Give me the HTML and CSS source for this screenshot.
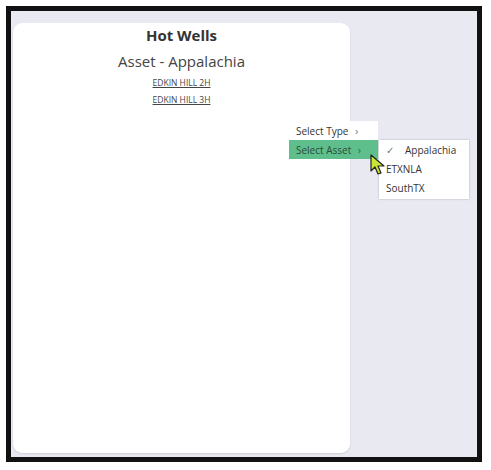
FILE: index.html
```html
<!DOCTYPE html>
<html>
<head>
<meta charset="utf-8">
<link rel="stylesheet" href="styles.css">
</head>
<body>
<div class="frame">
  <div class="card">
    <h1 class="title">Hot Wells</h1>
    <h2 class="subtitle">Asset - Appalachia</h2>
    <a class="well" href="#">EDKIN HILL 2H</a>
    <a class="well" href="#">EDKIN HILL 3H</a>
  </div>
  <div class="menu">
    <div class="item">Select Type <span class="chev">&#8250;</span></div>
    <div class="item active">Select Asset <span class="chev">&#8250;</span></div>
  </div>
  <div class="submenu">
    <div class="sub"><span class="check">&#10003;</span>Appalachia</div>
    <div class="sub">ETXNLA</div>
    <div class="sub">SouthTX</div>
  </div>
  <svg class="cursor" width="16" height="22" viewBox="0 0 16 22">
    <path d="M1 1 L1 17 L5 13 L8 20 L11 19 L8 12 L14 12 Z" fill="#c8e632" stroke="#222" stroke-width="1.2" stroke-linejoin="round"/>
  </svg>
</div>
</body>
</html>
```
FILE: styles.css
```css
html, body {
  margin: 0;
  padding: 0;
  background: #ffffff;
}
body {
  font-family: "Open Sans", "Liberation Sans", sans-serif;
}
.frame {
  position: relative;
  box-sizing: border-box;
  margin: 6px 0 0 6px;
  width: 476px;
  height: 456px;
  border: 5px solid #111;
  background: #e9e9f1;
  padding: 12px 0 0 2px;
}
.card {
  box-sizing: border-box;
  width: 337px;
  height: 430px;
  background: #fff;
  border-radius: 9px;
  box-shadow: 0 1px 2px rgba(0,0,0,0.12);
  display: flex;
  flex-direction: column;
  align-items: center;
  padding-top: 2px;
}
.title {
  margin: 0;
  font-size: 15px;
  font-weight: 700;
  color: #333;
  line-height: 20px;
}
.subtitle {
  margin: 6px 0 0;
  font-size: 15px;
  font-weight: 400;
  color: #444;
  line-height: 20px;
}
.well {
  font-size: 8.5px;
  color: #444;
  text-decoration: underline;
  line-height: 16px;
  margin-top: 4px;
}
.well + .well {
  margin-top: 1px;
}
.menu {
  position: absolute;
  left: 278px;
  top: 110px;
  width: 89px;
  background: #fff;
  font-size: 10px;
  color: #333;
}
.item {
  height: 19px;
  line-height: 19px;
  padding-left: 7px;
}
.item.active {
  background: #5ebf8d;
  color: #2c4a3a;
}
.chev {
  font-size: 11px;
  margin-left: 4px;
  color: #777;
}
.item.active .chev {
  color: #3c6a52;
}
.submenu {
  position: absolute;
  left: 368px;
  top: 129px;
  width: 90px;
  background: #fff;
  box-shadow: 0 0 2px rgba(0,0,0,0.25);
  font-size: 10px;
  color: #333;
  padding: 1px 0;
}
.sub {
  height: 19px;
  line-height: 19px;
  padding-left: 7px;
}
.check {
  display: inline-block;
  width: 19px;
  color: #777;
  font-size: 10px;
}
.cursor {
  position: absolute;
  left: 359px;
  top: 143px;
}
```
